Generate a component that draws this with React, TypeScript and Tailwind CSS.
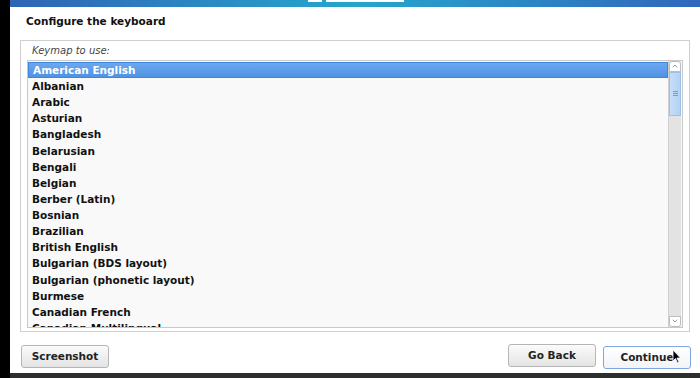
import { ChevronUp, ChevronDown } from "lucide-react";

const keymaps = [
  "American English",
  "Albanian",
  "Arabic",
  "Asturian",
  "Bangladesh",
  "Belarusian",
  "Bengali",
  "Belgian",
  "Berber (Latin)",
  "Bosnian",
  "Brazilian",
  "British English",
  "Bulgarian (BDS layout)",
  "Bulgarian (phonetic layout)",
  "Burmese",
  "Canadian French",
  "Canadian Multilingual",
];

function Button({ label, focused }: { label: string; focused?: boolean }) {
  return (
    <button
      className={`h-[23px] w-[88px] rounded-[3px] border pt-[1px] text-[10.5px] font-bold text-[#222] bg-gradient-to-b from-[#fbfbfb] to-[#e4e4e4] ${
        focused ? "border-[#7ea6df] from-white to-[#f2f4f8]" : "border-[#b5b5b5]"
      }`}
    >
      {label}
    </button>
  );
}

export default function App() {
  return (
    <div
      className="flex h-[378px] w-[700px] overflow-hidden bg-black"
      style={{ fontFamily: '"DejaVu Sans", sans-serif' }}
    >
      <div className="w-[10px] shrink-0" />
      <div className="flex flex-1 flex-col">
        {/* top banner */}
        <div className="relative h-[7px] bg-gradient-to-r from-[#2f63b4] via-[#24a6cc] to-[#3066bb]">
          <div className="absolute left-[298px] top-0 h-[2px] w-[14px] bg-white" />
          <div className="absolute left-[316px] top-0 h-[2px] w-[78px] bg-white" />
        </div>

        <div className="flex flex-1 flex-col bg-white pl-[10px] pr-[10px]">
          <h1 className="mt-[7px] pl-[6px] text-[10.5px] font-bold text-[#111]">
            Configure the keyboard
          </h1>

          {/* frame */}
          <div className="mt-[10px] flex flex-col border border-[#cfcfcf] px-[6px] pb-[3px]">
            <div className="py-[2px] pl-[5px] text-[10px] italic text-[#444]">
              Keymap to use:
            </div>
            <div className="flex h-[268px] border border-[#c9c9c9] bg-[#f9f9f9]">
              <div className="flex-1 overflow-hidden pt-[1px]">
                {keymaps.map((k, i) => (
                  <div
                    key={k}
                    className={`flex h-[16.13px] items-center pl-[4px] pt-[2px] text-[10.5px] font-bold ${
                      i === 0
                        ? "border border-[#3f86d8] bg-gradient-to-b from-[#6aa8f0] to-[#4f93e4] pl-[3px] text-white"
                        : "text-[#111]"
                    }`}
                  >
                    {k}
                  </div>
                ))}
              </div>
              {/* scrollbar */}
              <div className="mr-[1px] flex w-[13px] flex-col border-l border-[#cfcfcf] bg-[#e3e3e3]">
                <div className="flex h-[11px] items-center justify-center rounded-t-[3px] border border-[#bdbdbd] bg-white">
                  <ChevronUp size={8} strokeWidth={2} className="text-[#666]" />
                </div>
                <div className="flex h-[44px] flex-col items-center justify-center gap-[1px] border border-[#9cc0e6] bg-gradient-to-r from-[#c6def6] to-[#b3d2f2]">
                  <div className="h-px w-[5px] bg-[#7a9cc4]" />
                  <div className="h-px w-[5px] bg-[#7a9cc4]" />
                  <div className="h-px w-[5px] bg-[#7a9cc4]" />
                </div>
                <div className="flex-1" />
                <div className="flex h-[11px] items-center justify-center rounded-b-[3px] border border-[#bdbdbd] bg-white">
                  <ChevronDown size={8} strokeWidth={2} className="text-[#666]" />
                </div>
              </div>
            </div>
          </div>

          {/* buttons */}
          <div className="-mr-[1px] mt-[12px] flex items-center pl-[1px]">
            <Button label="Screenshot" />
            <div className="flex-1" />
            <div className="flex gap-[7px]">
              <Button label="Go Back" />
              <div className="relative">
                <Button label="Continue" focused />
                <svg
                  className="absolute left-[69px] top-[5px]"
                  width="10"
                  height="15"
                  viewBox="0 0 10 15"
                >
                  <path
                    d="M1 1 L1 12 L3.5 9.5 L5.5 14 L7 13.3 L5 9 L8.5 9 Z"
                    fill="#000"
                    stroke="#fff"
                    strokeWidth="0.8"
                  />
                </svg>
              </div>
            </div>
          </div>
          <div className="flex-1" />
        </div>
        <div className="h-[5px] bg-[#2e2e2e]" />
      </div>
    </div>
  );
}
